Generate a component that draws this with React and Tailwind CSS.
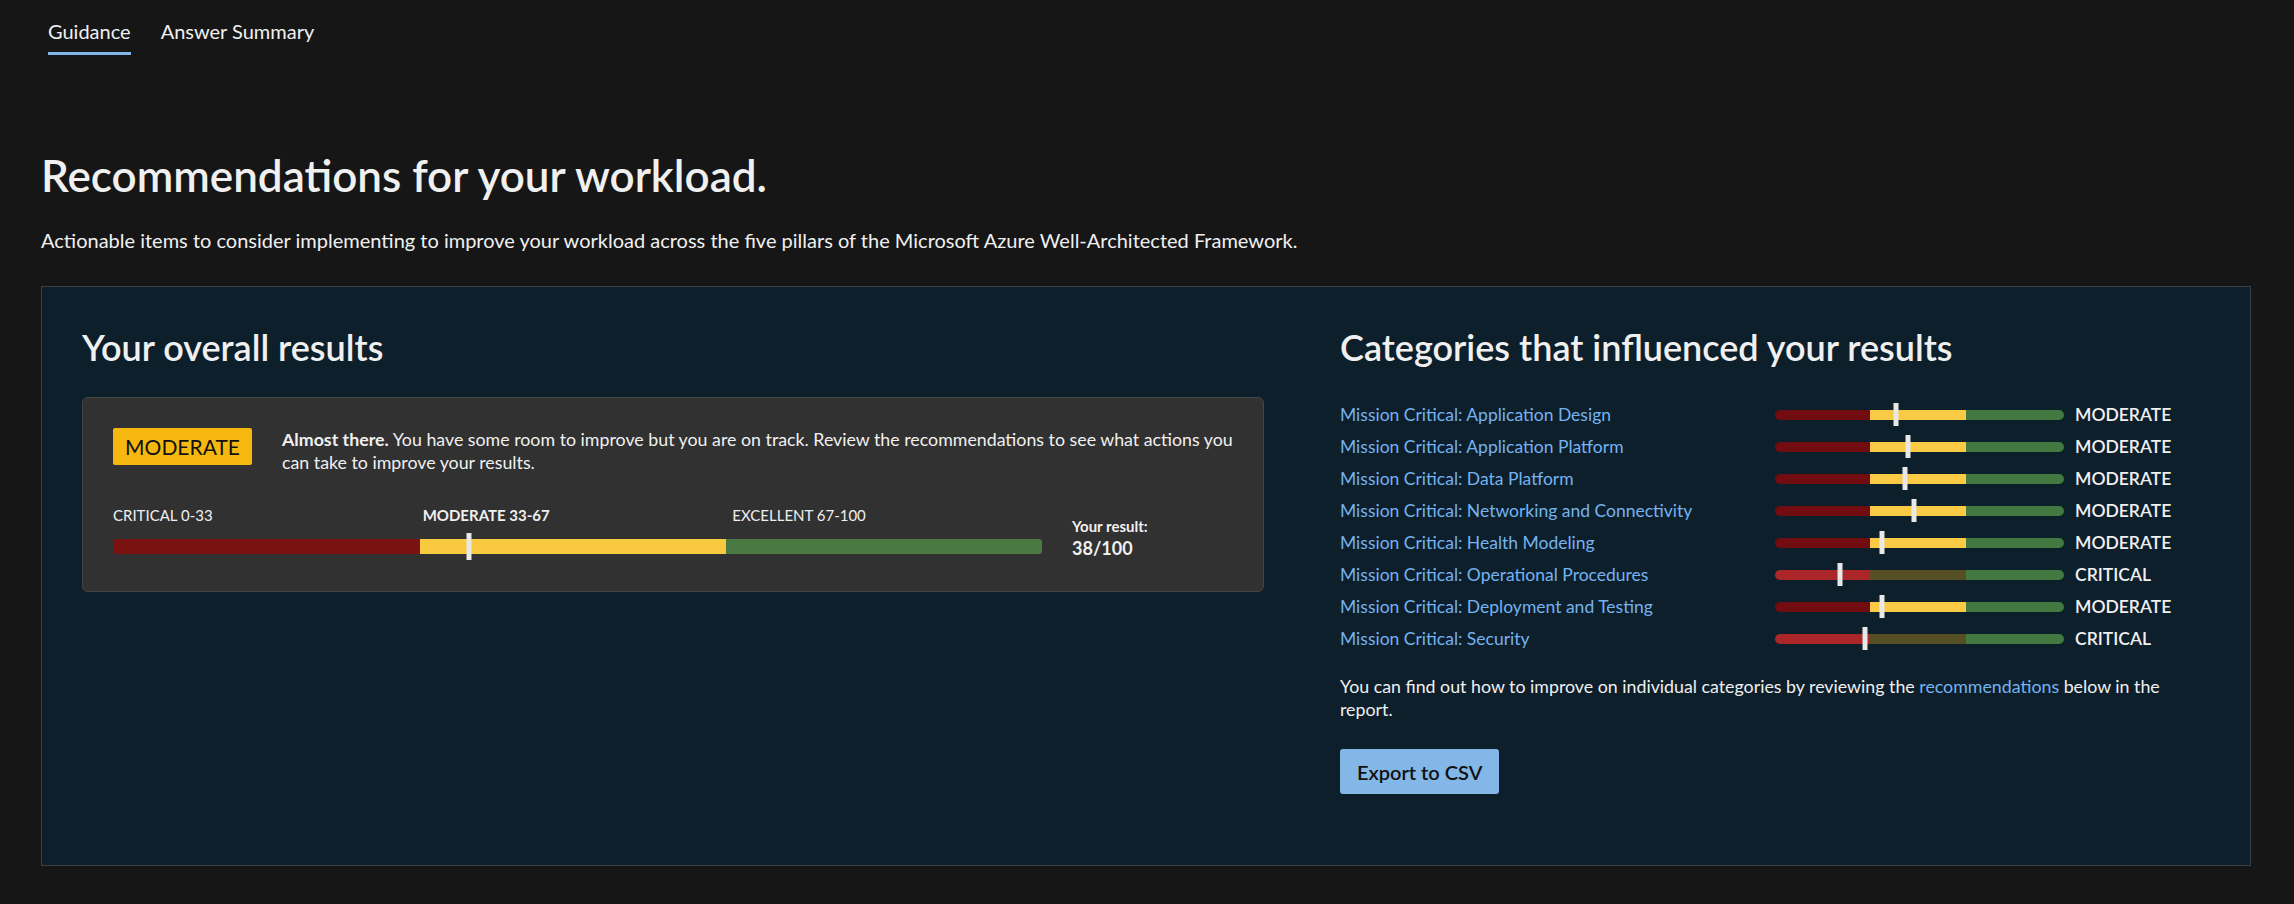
import React from 'react';

const categories = [
  { name: 'Mission Critical: Application Design', value: 42, status: 'MODERATE' },
  { name: 'Mission Critical: Application Platform', value: 46, status: 'MODERATE' },
  { name: 'Mission Critical: Data Platform', value: 45, status: 'MODERATE' },
  { name: 'Mission Critical: Networking and Connectivity', value: 48, status: 'MODERATE' },
  { name: 'Mission Critical: Health Modeling', value: 37, status: 'MODERATE' },
  { name: 'Mission Critical: Operational Procedures', value: 22.6, status: 'CRITICAL' },
  { name: 'Mission Critical: Deployment and Testing', value: 37, status: 'MODERATE' },
  { name: 'Mission Critical: Security', value: 31, status: 'CRITICAL' },
];

function Marker({ value, className }) {
  return (
    <div
      className={'absolute -translate-x-1/2 bg-[#e8e8e8] ' + className}
      style={{ left: `${value}%` }}
    />
  );
}

function CategoryBar({ value, status }) {
  const critical = status === 'CRITICAL';
  return (
    <div className="relative h-[10px] w-[289px]">
      <div className="flex h-full overflow-hidden rounded-full">
        <div className={critical ? 'w-[33%] bg-[#aa2628]' : 'w-[33%] bg-[#710d11]'} />
        <div className={critical ? 'w-[33%] bg-[#564f24]' : 'w-[33%] bg-[#f9ca43]'} />
        <div className="w-[34%] bg-[#437840]" />
      </div>
      <Marker value={value} className="top-[-7px] h-[23px] w-[5px]" />
    </div>
  );
}

export default function App() {
  return (
    <div className="min-h-screen bg-[#161616] text-[#f0f0f0] font-['Segoe_UI','Lato',sans-serif] pl-[41px] pr-[43px]">
      <nav className="flex gap-[30px] pl-[7px] pt-[18px] text-[20px] leading-[27px]">
        <div className="border-b-[3px] border-[#7fb6ec] pb-[7px]">Guidance</div>
        <div className="border-b-[3px] border-transparent pb-[7px]">Answer Summary</div>
      </nav>

      <h1 className="mt-[94px] text-[44px] leading-[53px] font-semibold">Recommendations for your workload.</h1>
      <p className="mt-[25px] text-[20px] leading-[26px]">
        Actionable items to consider implementing to improve your workload across the five pillars of the Microsoft Azure Well-Architected Framework.
      </p>

      <section className="mt-[33px] border border-[#3b3f44] bg-[#0e1f2c] pl-[40px] pr-[41px] pt-[39px] pb-[71px]">
        <div className="grid grid-cols-[1182px_1fr] gap-[76px]">
          <div>
            <h2 className="text-[36px] leading-[42px] font-semibold">Your overall results</h2>
            <div className="mt-[29px] rounded-[6px] border border-[#454545] bg-[#313131] px-[30px] pt-[30px] pb-[37px]">
              <div className="flex items-start gap-[30px]">
                <div className="flex h-[37px] w-[139px] shrink-0 items-center justify-center rounded-[2px] bg-[#f6b80f] text-[21px] leading-[26px] text-[#111]">
                  MODERATE
                </div>
                <p className="text-[17.8px] leading-[23px]">
                  <b className="font-bold">Almost there.</b> You have some room to improve but you are on track. Review the recommendations to see what actions you can take to improve your results.
                </p>
              </div>

              <div className="mt-[31px] flex gap-[30px]">
                <div className="flex-1">
                  <div className="grid grid-cols-3 text-[15px] leading-[20px]">
                    <div>CRITICAL 0-33</div>
                    <div className="font-bold">MODERATE 33-67</div>
                    <div>EXCELLENT 67-100</div>
                  </div>
                  <div className="relative mt-[14px] h-[15px]">
                    <div className="flex h-full overflow-hidden rounded-[3px]">
                      <div className="w-[33%] bg-[#7b1212]" />
                      <div className="w-[33%] bg-[#f9c940]" />
                      <div className="w-[34%] bg-[#4a7942]" />
                    </div>
                    <Marker value={38.3} className="top-[-6px] h-[27px] w-[5px]" />
                  </div>
                </div>
                <div className="h-[49px] w-[161px] pt-[11px]">
                  <div className="text-[15px] leading-[20px] font-bold">Your result:</div>
                  <div className="text-[18px] leading-[24px] font-bold">38/100</div>
                </div>
              </div>
            </div>
          </div>

          <div>
            <h2 className="text-[36px] leading-[42px] font-semibold">Categories that influenced your results</h2>
            <div className="mt-[31px]">
              {categories.map((c) => (
                <div key={c.name} className="grid h-[32px] grid-cols-[424px_289px_auto] items-center gap-[11px] text-[17.5px]">
                  <a className="text-[#74b3ef]">{c.name}</a>
                  <CategoryBar value={c.value} status={c.status} />
                  <span className="font-semibold">{c.status}</span>
                </div>
              ))}
            </div>
            <p className="mt-[20px] max-w-[840px] text-[17.8px] leading-[23px]">
              You can find out how to improve on individual categories by reviewing the <a className="text-[#74b3ef]">recommendations</a> below in the report.
            </p>
            <button className="mt-[28px] h-[45px] rounded-[3px] bg-[#82b7e8] px-[17px] text-[20px] font-semibold text-[#111]">
              Export to CSV
            </button>
          </div>
        </div>
      </section>
    </div>
  );
}
